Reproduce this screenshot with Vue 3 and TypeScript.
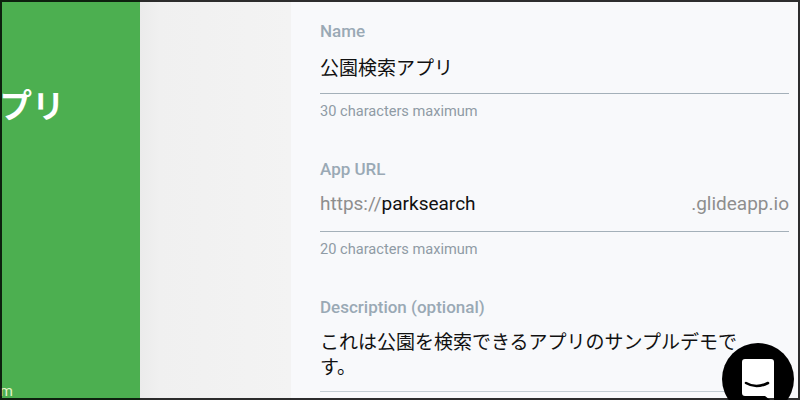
<script setup lang="ts">
interface Field {
  label: string
  hint?: string
}
const name = '公園検索アプリ'
const description = 'これは公園を検索できるアプリのサンプルデモです。'
const fields: Field[] = [{ label: 'Name', hint: '30 characters maximum' }]
</script>

<template>
  <div class="page">
    <aside class="preview">
      <div class="app-title">{{ name }}</div>
      <div class="app-url">parksearch.glideapp.com</div>
    </aside>
    <div class="gutter"></div>
    <main class="form">
      <section class="field">
        <label class="label">{{ fields[0].label }}</label>
        <div class="value">{{ name }}</div>
        <div class="hint">{{ fields[0].hint }}</div>
      </section>
      <section class="field">
        <label class="label">App URL</label>
        <div class="value url">
          <span class="muted">https://</span><span>parksearch</span>
          <span class="muted suffix">.glideapp.io</span>
        </div>
        <div class="hint">20 characters maximum</div>
      </section>
      <section class="field">
        <label class="label">Description (optional)</label>
        <div class="value multi">{{ description }}</div>
      </section>
    </main>
    <button class="chat" aria-label="Chat">
      <svg width="32" height="44" viewBox="0 0 32 44">
        <path d="M3 0H29Q32 0 32 3V44L23 37H3Q0 37 0 34V3Q0 0 3 0Z" fill="#fff" />
        <path d="M4 24Q14 30 26 24" fill="none" stroke="#000" stroke-width="2.6" stroke-linecap="round" />
      </svg>
    </button>
    <div class="frame"></div>
  </div>
</template>

<style>
html,
body {
  margin: 0;
  overflow: hidden;
}
</style>

<style scoped>
.page {
  position: relative;
  display: flex;
  width: 800px;
  height: 400px;
  overflow: hidden;
  background: #f8f9fb;
  font-family: Roboto, "Noto Sans CJK JP", sans-serif;
}
.frame {
  position: absolute;
  inset: 0;
  border: 2px solid rgba(0, 0, 0, 0.82);
  pointer-events: none;
}
.preview {
  display: flex;
  flex-direction: column;
  flex: 0 0 140px;
  overflow: hidden;
  background: #4caf50;
  color: #fff;
  white-space: nowrap;
}
.app-title {
  margin: 81px 0 0 -163px;
  font: 700 32.5px/46px "Noto Sans CJK JP", sans-serif;
}
.app-url {
  margin: auto 0 0 -156px;
  padding-bottom: 1px;
  font-size: 15px;
  line-height: 16px;
  color: #e3f5c8;
}
.gutter {
  flex: 0 0 151px;
  background: linear-gradient(90deg, #ebebeb 0, #f0f0f0 20px, #f3f3f3 100%);
}
.form {
  flex: 1;
  padding: 21px 11px 0 29px;
  min-width: 0;
}
.field {
  margin-bottom: 38px;
}
.label {
  display: block;
  font-size: 17px;
  font-weight: 500;
  line-height: 20px;
  color: #9aa9b5;
}
.value {
  margin-top: 12px;
  padding: 3px 0 12px;
  border-bottom: 1px solid #a4b0b9;
  font-size: 19px;
  line-height: 25px;
  color: #111;
}
.url {
  display: flex;
  margin-top: 9px;
  padding: 3px 0 15px;
}
.suffix {
  margin-left: auto;
}
.muted {
  color: #8e8e8e;
}
.multi {
  padding: 0 39px 11px 0;
  margin-top: 13px;
  border-bottom-color: #c3cdd4;
}
.hint {
  margin-top: 8px;
  font-size: 14.6px;
  line-height: 19px;
  color: #8f9ba5;
}
.chat {
  position: absolute;
  left: 722px;
  top: 343px;
  display: flex;
  justify-content: center;
  padding: 16px 0 0;
  width: 72px;
  height: 72px;
  border: 0;
  border-radius: 50%;
  background: #000;
}
</style>
